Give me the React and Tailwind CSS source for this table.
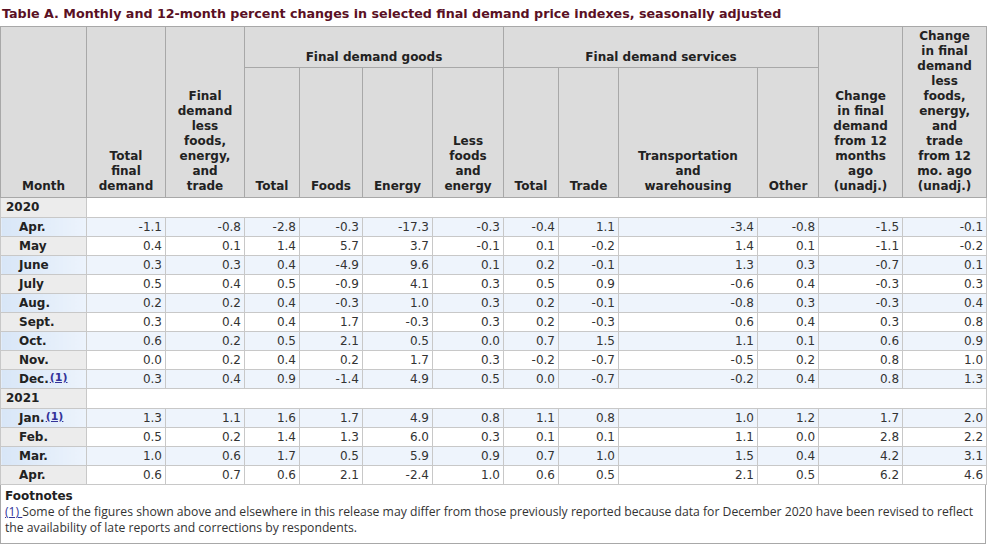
import React from "react";

const widths = [86, 79, 79, 55, 63, 70, 71, 55, 60, 139, 61, 84, 84];

const years = [
    {
        year: "2020",
        rows: [
            ["Apr.", "-1.1", "-0.8", "-2.8", "-0.3", "-17.3", "-0.3", "-0.4", "1.1", "-3.4", "-0.8", "-1.5", "-0.1"],
            ["May", "0.4", "0.1", "1.4", "5.7", "3.7", "-0.1", "0.1", "-0.2", "1.4", "0.1", "-1.1", "-0.2"],
            ["June", "0.3", "0.3", "0.4", "-4.9", "9.6", "0.1", "0.2", "-0.1", "1.3", "0.3", "-0.7", "0.1"],
            ["July", "0.5", "0.4", "0.5", "-0.9", "4.1", "0.3", "0.5", "0.9", "-0.6", "0.4", "-0.3", "0.3"],
            ["Aug.", "0.2", "0.2", "0.4", "-0.3", "1.0", "0.3", "0.2", "-0.1", "-0.8", "0.3", "-0.3", "0.4"],
            ["Sept.", "0.3", "0.4", "0.4", "1.7", "-0.3", "0.3", "0.2", "-0.3", "0.6", "0.4", "0.3", "0.8"],
            ["Oct.", "0.6", "0.2", "0.5", "2.1", "0.5", "0.0", "0.7", "1.5", "1.1", "0.1", "0.6", "0.9"],
            ["Nov.", "0.0", "0.2", "0.4", "0.2", "1.7", "0.3", "-0.2", "-0.7", "-0.5", "0.2", "0.8", "1.0"],
            ["Dec.", "0.3", "0.4", "0.9", "-1.4", "4.9", "0.5", "0.0", "-0.7", "-0.2", "0.4", "0.8", "1.3"],
        ],
    },
    {
        year: "2021",
        rows: [
            ["Jan.", "1.3", "1.1", "1.6", "1.7", "4.9", "0.8", "1.1", "0.8", "1.0", "1.2", "1.7", "2.0"],
            ["Feb.", "0.5", "0.2", "1.4", "1.3", "6.0", "0.3", "0.1", "0.1", "1.1", "0.0", "2.8", "2.2"],
            ["Mar.", "1.0", "0.6", "1.7", "0.5", "5.9", "0.9", "0.7", "1.0", "1.5", "0.4", "4.2", "3.1"],
            ["Apr.", "0.6", "0.7", "0.6", "2.1", "-2.4", "1.0", "0.6", "0.5", "2.1", "0.5", "6.2", "4.6"],
        ],
    },
];

const footnoted = ["2020-Dec.", "2021-Jan."];

const th = "border border-[#a8a8a8] bg-[#dcdcdc] font-bold text-[#222] text-center align-bottom px-[2px] pb-[3px] leading-[15px]";

function FootRef() {
    return (
        <span className="text-[11px] text-[#333399] underline align-top leading-[14px] ml-[1px]">(1)</span>
    );
}

export default function App() {
    return (
        <div className="w-[988px] h-[548px] bg-white text-[12px] text-[#333]" style={{ fontFamily: '"DejaVu Sans", Verdana, sans-serif' }}>
            <div className="pl-[2px] pt-[5px] h-[26px] text-[12.7px] leading-[18px] font-bold text-[#5a1024] whitespace-nowrap">
                Table A. Monthly and 12-month percent changes in selected final demand price indexes, seasonally adjusted
            </div>
            <table className="table-fixed border-collapse w-[986px] text-[12px]">
                <colgroup>
                    {widths.map((w, i) => (
                        <col key={i} style={{ width: w }} />
                    ))}
                </colgroup>
                <thead>
                    <tr className="h-[41px]">
                        <th rowSpan={2} className={th}>Month</th>
                        <th rowSpan={2} className={th}>Total<br />final<br />demand</th>
                        <th rowSpan={2} className={th}>Final<br />demand<br />less<br />foods,<br />energy,<br />and<br />trade</th>
                        <th colSpan={4} className={th + " !pb-[2px]"}>Final demand goods</th>
                        <th colSpan={4} className={th + " !pb-[2px]"}>Final demand services</th>
                        <th rowSpan={2} className={th}>Change<br />in final<br />demand<br />from 12<br />months<br />ago<br />(unadj.)</th>
                        <th rowSpan={2} className={th}>Change<br />in final<br />demand<br />less<br />foods,<br />energy,<br />and<br />trade<br />from 12<br />mo. ago<br />(unadj.)</th>
                    </tr>
                    <tr className="h-[130px]">
                        <th className={th}>Total</th>
                        <th className={th}>Foods</th>
                        <th className={th}>Energy</th>
                        <th className={th}>Less<br />foods<br />and<br />energy</th>
                        <th className={th}>Total</th>
                        <th className={th}>Trade</th>
                        <th className={th}>Transportation<br />and<br />warehousing</th>
                        <th className={th}>Other</th>
                    </tr>
                </thead>
                <tbody>
                    {years.map((y) => (
                        <React.Fragment key={y.year}>
                            <tr className="h-[20px]">
                                <th className="border border-[#c8c8c8] bg-[#ececec] text-left font-bold text-[#222] pl-[5px] leading-[17px]">{y.year}</th>
                                <td colSpan={12} className="border border-[#c8c8c8] bg-white"></td>
                            </tr>
                            {y.rows.map((r, i) => {
                                const blue = i % 2 === 0;
                                return (
                                    <tr key={r[0]} className={"h-[19px] " + (blue ? "bg-[#eef4fc]" : "bg-white")}>
                                        <th
                                            className={
                                                "border border-[#c8c8c8] text-left font-bold text-[#222] pl-[18px] leading-[17px] whitespace-nowrap " +
                                                (blue ? "bg-gradient-to-r from-[#d8e6f7] to-[#ecf3fc]" : "bg-[#ececec]")
                                            }
                                        >
                                            {r[0]}
                                            {footnoted.includes(y.year + "-" + r[0]) && <FootRef />}
                                        </th>
                                        {r.slice(1).map((v, j) => (
                                            <td key={j} className="border border-[#c8c8c8] text-right pr-[3px] leading-[17px]">
                                                {v}
                                            </td>
                                        ))}
                                    </tr>
                                );
                            })}
                        </React.Fragment>
                    ))}
                </tbody>
            </table>
            <div className="w-[986px] h-[59px] border border-t-0 border-[#a8a8a8] px-[4px] pt-[3px] leading-[16px]">
                <div className="font-bold text-[#222]">Footnotes</div>
                <div className="text-[12.2px] leading-[16px] text-[#333]" style={{ fontFamily: '"Open Sans", sans-serif' }}>
                    <span className="text-[#333399] underline">(1) </span>Some of the figures shown above and elsewhere in this release may differ from those previously reported because data for December 2020 have been revised to reflect the availability of late reports and corrections by respondents.
                </div>
            </div>
        </div>
    );
}
